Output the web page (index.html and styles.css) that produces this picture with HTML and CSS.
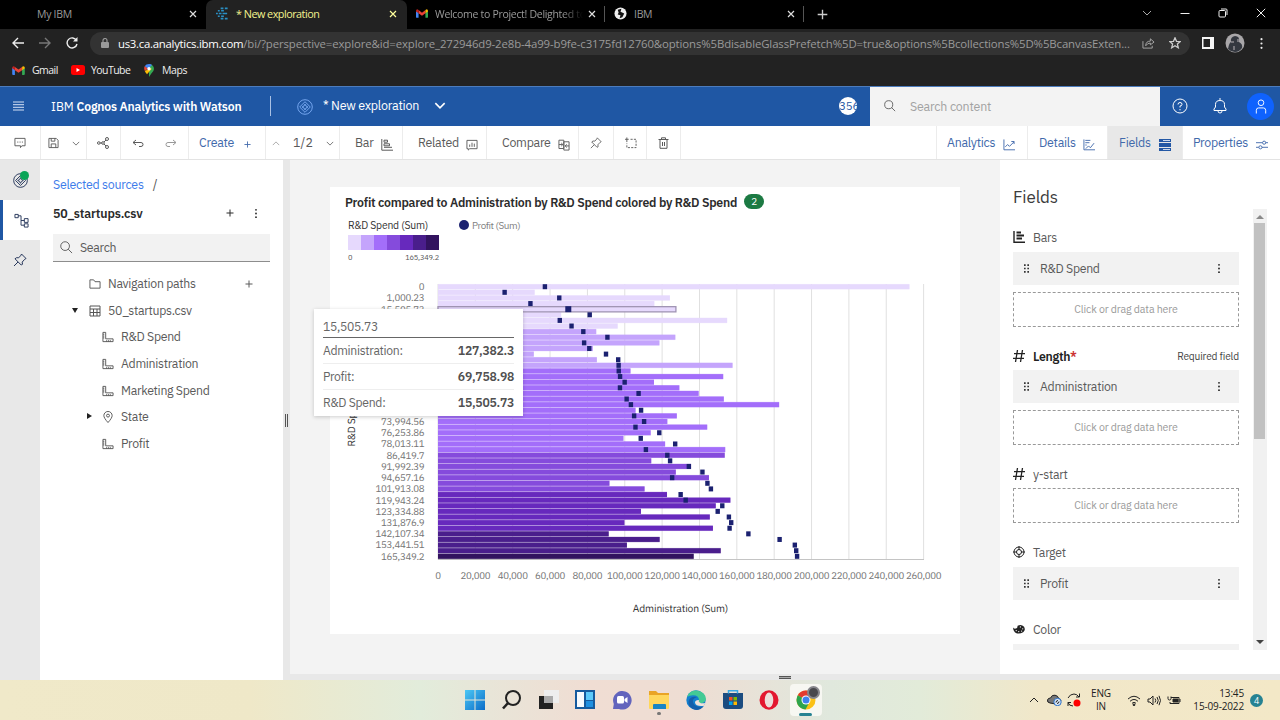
FILE: index.html
```html
<!DOCTYPE html>
<html lang="en">
<head>
<meta charset="utf-8">
<title>* New exploration</title>
<link rel="stylesheet" href="styles.css">
</head>
<body>
<svg class="defs" aria-hidden="true">
  <symbol id="x" viewBox="0 0 8 8"><path d="M1 1l6 6M7 1l-6 6"/></symbol>
  <symbol id="plus" viewBox="0 0 8 8"><path d="M4 .5v7M.5 4h7"/></symbol>
  <symbol id="down" viewBox="0 0 10 6"><path d="M1 1l4 4 4-4"/></symbol>
  <symbol id="up" viewBox="0 0 10 6"><path d="M1 5l4-4 4 4"/></symbol>
  <symbol id="dots" viewBox="0 0 4 12"><g fill="currentColor" stroke="none"><circle cx="2" cy="2" r="1"/><circle cx="2" cy="6" r="1"/><circle cx="2" cy="10" r="1"/></g></symbol>
  <symbol id="grip" viewBox="0 0 6 10"><path fill="currentColor" stroke="none" d="M0 0h2v2H0zM4 0h2v2H4zM0 4h2v2H0zM4 4h2v2H4zM0 8h2v2H0zM4 8h2v2H4z"/></symbol>
  <symbol id="lens" viewBox="0 0 14 14"><circle cx="5.500" cy="5.500" r="4.700"/><path d="M8.800 8.800L13 13"/></symbol>
  <symbol id="gmail" viewBox="0 0 14 10"><g stroke="none"><path fill="#4285f4" d="M0 2v7q0 1 1 1h2V4z"/><path fill="#34a853" d="M14 2v7q0 1-1 1h-2V4z"/><path fill="#ea4335" d="M3 1l4 3 4-3v3.600L7 7.600 3 4.600z"/><path fill="#c5221f" d="M0 2Q0 0 2 .2L3 1v3.600L0 2.600z"/><path fill="#fbbc04" d="M14 2q0-2-2-1.800L11 1v3.600l3-2z"/></g></symbol>
  <symbol id="compass" viewBox="0 0 16 16"><circle cx="8" cy="8" r="7.300"/><path d="M8 2.700L13.300 8 8 13.300 2.700 8z"/><path d="M8 5l1 2 2 1-2 1-1 2-1-2-2-1 2-1z"/></symbol>
  <symbol id="pin" viewBox="0 0 14 14"><path d="M8.500 1L13 5.500l-1.300.8-2.500 2.800.3 2.200L8.200 12 2 5.800l1.500-1.100 2.200.1L8 2.200zM5 9l-4 4"/></symbol>
  <symbol id="ruler" viewBox="0 0 13 12"><path d="M1 1h3v7h8v3H1zM1 3h1.500M1 5h1.500M1 7h1.500M5 11V9.500M7 11V9.500M9 11V9.500"/></symbol>
  <symbol id="bars" viewBox="0 0 12 12"><path d="M.8 0v11.200H12M3 1.200h3.500v2H3zM3 4.800h5.500v2H3zM3 8.300h8"/></symbol>
  <symbol id="hash" viewBox="0 0 12 12"><path d="M4.500 0L2.500 12M9.500 0l-2 12M1 3.700h11M0 8.300h11"/></symbol>
</svg>

<div class="screen">
  <div class="tabs">
    <div class="tab t1"><span>My IBM</span><svg class="close"><use href="#x"/></svg></div>
    <div class="tab t2 active">
      <svg class="fav" viewBox="0 0 14 14"><path d="M5 1.500h3M9.500 1.500h3M2 4h2M5.500 4h3M0 7h2M3 7h3M7 7h5M2 10h2M5.500 10h3M5 12.500h3M9.500 12.500h3"/></svg>
      <span>* New exploration</span><svg class="close"><use href="#x"/></svg></div>
    <div class="tab t3"><svg class="fav gm"><use href="#gmail"/></svg><span class="fade">Welcome to Project! Delighted to</span><svg class="close"><use href="#x"/></svg></div>
    <div class="tab t4"><svg class="fav" viewBox="0 0 14 14"><circle cx="7" cy="7" r="6.500" fill="#eee"/><path d="M4 3l4-1-1 3 4 2-2 4-3 1 1-3-3-1 1-2z" fill="#111"/></svg><span>IBM</span><svg class="close"><use href="#x"/></svg></div>
    <svg class="newtab"><use href="#plus"/></svg>
    <div class="winctl">
      <svg class="w-down"><use href="#down"/></svg>
      <svg class="w10" viewBox="0 0 10 10"><path d="M.5 5.500h9"/></svg>
      <svg class="w10" viewBox="0 0 10 10"><rect x="1" y="2.500" width="6.500" height="6.500" rx="1"/><path d="M3 1h5q1 0 1 1v5"/></svg>
      <svg class="w10" viewBox="0 0 10 10"><path d="M.8.8l8.400 8.400M9.200.8L.8 9.200"/></svg>
    </div>
  </div>

  <div class="navbar">
    <svg class="nv" viewBox="0 0 12 12"><path d="M12 6H1M6 1L1 6l5 5"/></svg>
    <svg class="nv dim" viewBox="0 0 12 12"><path d="M0 6h11M6 1l5 5-5 5"/></svg>
    <svg class="nv" viewBox="0 0 12 12"><path d="M10.500 3.500A5 5 0 1 0 11 7"/><path d="M11.500 0v4.500H7z" fill="#eee" stroke="none"/></svg>
    <div class="omni">
      <svg class="lock" viewBox="0 0 8 10"><rect y="4" width="8" height="6" rx="1" fill="#9a9a9a" stroke="none"/><path d="M2 4V2.500a2 2 0 0 1 4 0V4"/></svg>
      <span class="url"><b>us3.ca.analytics.ibm.com</b><i>/bi/?perspective=explore&amp;id=explore_272946d9-2e8b-4a99-b9fe-c3175fd12760&amp;options%5BdisableGlassPrefetch%5D=true&amp;options%5Bcollections%5D%5BcanvasExten...</i></span>
      <svg class="share0" viewBox="0 0 14 12"><path d="M1 4v7.500h10V9M4 9q0-5 5-5V1.500L13 5 9 8V6Q6 6 4 9z"/></svg>
      <svg class="star" viewBox="0 0 12 12"><path d="M6 .8l1.500 3.500 3.800.3-2.900 2.500.9 3.700L6 8.800l-3.300 2 .9-3.700L.7 4.600l3.800-.3z"/></svg>
    </div>
    <svg class="side" viewBox="0 0 12 12"><path fill="#f5f5f5" stroke="none" fill-rule="evenodd" d="M0 0h12v12H0zM1.500 2v8H8V2z"/></svg>
    <svg class="ava" viewBox="0 0 20 20"><circle cx="10" cy="10" r="9.500" fill="#a9a7a9"/><path d="M3 16q1-6 3-7-1-5 4-6 5 0 4 6 4 2 3 6-3 4-7 4-4 0-7-3z" fill="#343840"/><path d="M6 8h3v2H6zM12 6h2v3h-2zM8 13h2v4H8z" fill="#77767c"/></svg>
    <svg class="menu0"><use href="#dots"/></svg>
  </div>

  <div class="bookmarks">
    <svg class="bm"><use href="#gmail"/></svg><span class="b1">Gmail</span>
    <svg class="yt" viewBox="0 0 14 10"><rect width="14" height="10" rx="2.500" fill="#f00"/><path d="M5.500 3v4L9 5z" fill="#fff"/></svg><span class="b2">YouTube</span>
    <svg class="mp" viewBox="0 0 10 13"><path d="M5 0a5 5 0 0 1 5 5Q10 7 7 10L5 13z" fill="#34a853"/><path d="M5 0Q2 0 .7 2.300L4 5l4-4Q7 0 5 0z" fill="#4285f4"/><path d="M.7 2.300Q-.4 4 .8 7L4 4.800z" fill="#ea4335"/><path d="M.8 7Q1.300 8.300 3 10.300L8 4.500 5 5z" fill="#fbbc04"/><circle cx="5" cy="4.800" r="1.700" fill="#fff"/></svg><span>Maps</span>
  </div>

  <header class="appbar">
    <svg class="burger" viewBox="0 0 11 10"><path d="M0 1h11M0 3.700h11M0 6.300h11M0 9h11"/></svg>
    <span class="brand">IBM <b>Cognos Analytics with Watson</b></span>
    <div class="vline"></div>
    <svg class="comp"><use href="#compass"/></svg>
    <span class="expl">* New exploration</span>
    <svg class="exd"><use href="#down"/></svg>
    <span class="count"><span>356</span></span>
    <div class="gsearch"><svg><use href="#lens"/></svg><span>Search content</span></div>
    <svg class="help" viewBox="0 0 16 16"><circle cx="8" cy="8" r="7"/><path d="M6 6.500q0-2 2-2t2 1.800Q10 8 8 8v1.500M8 11v1.300"/></svg>
    <svg class="bell" viewBox="0 0 14 16"><path d="M7 0v2M1 12.500V11l1.500-2V6.500q0-4 4.500-4t4.500 4V9l1.500 2v1.500zM5 13q0 2 2 2t2-2"/></svg>
    <span class="user"><svg viewBox="0 0 12 16"><circle cx="6" cy="4" r="3"/><path d="M1 15.500V12q0-2.500 2.500-2.500h5Q11 9.500 11 12v3.500"/></svg></span>
  </header>

  <nav class="tools">
    <div class="c c1"><svg class="s12" viewBox="0 0 13 12"><path d="M1 1h11v8H8.500l-1.500 2V9H1zM3.500 5h1.200M6 5h1.200M8.500 5h1.200"/></svg></div>
    <div class="c c2"><svg class="s11" viewBox="0 0 12 12"><path d="M1 1h8l2 2v8H1zM3.500 1v3h4V1M3.500 11V7h5v4"/></svg><svg class="dn"><use href="#down"/></svg></div>
    <div class="c c3"><svg class="s12" viewBox="0 0 12 12"><circle cx="10" cy="2" r="1.500"/><circle cx="10" cy="10" r="1.500"/><circle cx="6" cy="6" r="1.300"/><circle cx="1.800" cy="6" r="1.300"/><path d="M3 6h2M7 5l2-2M7 7l2 2"/></svg></div>
    <div class="c c4"><svg class="un" viewBox="0 0 12 9"><path d="M4 1L1 3.500 4 6M1 3.500h8q2 0 2 2t-2 2H7"/></svg><svg class="un dim2" viewBox="0 0 12 9"><path d="M8 1l3 2.500L8 6M11 3.500H3q-2 0-2 2t2 2h2"/></svg></div>
    <div class="c c5 blue"><span>Create</span><svg class="pl"><use href="#plus"/></svg></div>
    <div class="c c6"><svg class="dn dim2"><use href="#up"/></svg><span>1/2</span><svg class="dn"><use href="#down"/></svg></div>
    <div class="c c7"><span>Bar</span><svg class="s12 lo"><use href="#bars"/></svg></div>
    <div class="c c8"><span>Related</span><svg class="s12 lo" viewBox="0 0 13 12"><path d="M1 1h11v9H4l-1.500 1.500V10H1zM4 8V5.500M6.500 8V3.500M9 8V4.500"/></svg></div>
    <div class="c c9"><span>Compare</span><svg class="s12 lo" viewBox="0 0 13 12"><path d="M1 .8h5.300v9H1zM6.300 2.500H12v9H6.300zM1 5.500h4M3.500 3.800L5.300 5.500 3.500 7.200M12 7H8M9.500 5.300L7.700 7l1.800 1.700"/></svg></div>
    <div class="c c10"><svg class="s12"><use href="#pin"/></svg></div>
    <div class="c c11"><svg class="s12" viewBox="0 0 13 12"><path d="M2 0v5M0 2h4"/><path d="M6 2h6v9H2V6.500" stroke-dasharray="2.300 1.300"/></svg></div>
    <div class="c c12"><svg class="s11" viewBox="0 0 10 12"><path d="M0 2.500h10M3 2V.8h4V2M1.500 3v8.300h7V3M4 5v4M6 5v4"/></svg></div>
    <div class="grow"></div>
    <div class="c c13 blue"><span>Analytics</span><svg class="s12 lo" viewBox="0 0 13 12"><path d="M1 0v11.200h12M2.500 8L5 5.500l2 2 5-5M9 2.200h3V5"/></svg></div>
    <div class="c c14 blue"><span>Details</span><svg class="s12 lo" viewBox="0 0 13 12"><path d="M1 0v11.200h12M2.500 1H8M2.500 3.500H7M2.500 6H4M3 10l3-3 2 2 4-5"/></svg></div>
    <div class="c c15 blue sel"><span>Fields</span><svg class="s12 lo" viewBox="0 0 12 12"><path d="M0 0h12v3H0zM0 4h12v4H0zM0 9h12v3H0z" fill="#2458a5" stroke="none"/><path d="M4 1.500h7M4 10.500h7" stroke="#c9d8ef"/></svg></div>
    <div class="c c16 blue"><span>Properties</span><svg class="s12 lo" viewBox="0 0 13 12"><path d="M0 3.500h7M10.500 3.500H13M0 8.500h3M6.500 8.500H13"/><circle cx="8.800" cy="3.500" r="1.700"/><circle cx="4.800" cy="8.500" r="1.700"/></svg></div>
  </nav>

  <main class="body">
    <aside class="rail">
      <div class="r"><svg class="s15"><use href="#compass"/></svg><i class="green"></i></div>
      <div class="r on"><svg class="s15" viewBox="0 0 16 16"><path d="M1 1.500h3.500V5H1zM4.500 3H7.500v10H11M7.500 8H11M11 6h4v4h-4zM11 11.500h4v3.500h-4z"/></svg></div>
      <div class="r"><svg class="s14"><use href="#pin"/></svg></div>
    </aside>

    <section class="sources">
      <div class="crumb"><span>Selected sources</span><em>/</em></div>
      <div class="srcname"><b>50_startups.csv</b><svg class="p7"><use href="#plus"/></svg><svg class="kb"><use href="#dots"/></svg></div>
      <div class="find"><svg><use href="#lens"/></svg><span>Search</span></div>
      <div class="tree">
        <div class="row l1"><svg class="s12" viewBox="0 0 13 12"><path d="M1 1.500h4l1.500 2H12v7H1z"/></svg><span class="n1">Navigation paths</span><svg class="p7"><use href="#plus"/></svg></div>
        <div class="row l1"><i class="caret d"></i><svg class="s12" viewBox="0 0 12 12"><path d="M1 1h10v10H1zM1 4h10M1 7.500h10M4.500 4v7M8 4v7"/></svg><span>50_startups.csv</span></div>
        <div class="row l2"><svg class="s12"><use href="#ruler"/></svg><span>R&amp;D Spend</span></div>
        <div class="row l2"><svg class="s12"><use href="#ruler"/></svg><span>Administration</span></div>
        <div class="row l2"><svg class="s12"><use href="#ruler"/></svg><span>Marketing Spend</span></div>
        <div class="row l2"><i class="caret rt"></i><svg class="s12" viewBox="0 0 12 13"><path d="M6 12.500Q1.500 7.500 1.500 5a4.500 4.500 0 0 1 9 0q0 2.500-4.500 7.500z"/><circle cx="6" cy="5" r="1.600"/></svg><span>State</span></div>
        <div class="row l2"><svg class="s12"><use href="#ruler"/></svg><span>Profit</span></div>
      </div>
    </section>
    <div class="split"><i></i></div>

    <section class="canvas">
      <div class="card">
        <h1><span>Profit compared to Administration by R&amp;D Spend colored by R&amp;D Spend</span><b>2</b></h1>
        <div class="legend">
          <div class="lg1"><span class="lgt">R&amp;D Spend (Sum)</span>
            <div class="ramp"><i class="k0"></i><i class="k1"></i><i class="k2"></i><i class="k3"></i><i class="k4"></i><i class="k5"></i><i class="k6"></i></div>
            <div class="range"><span>0</span><span>165,349.2</span></div></div>
          <div class="lg2"><i></i><span>Profit (Sum)</span></div>
        </div>
        <svg id="plot" viewBox="330 270 630 364"></svg>
        <div class="tip">
          <div class="th">15,505.73</div>
          <div class="tr"><span>Administration:</span><b>127,382.3</b></div>
          <div class="tr"><span>Profit:</span><b>69,758.98</b></div>
          <div class="tr"><span>R&amp;D Spend:</span><b>15,505.73</b></div>
        </div>
      </div>
      <div class="dock"><i></i></div>
    </section>

    <aside class="fields">
      <h2>Fields</h2>
      <div class="fwrap">
        <div class="flist">
          <div class="fh"><svg class="s12 hb" viewBox="0 0 12 12"><path d="M1 0v11.200h11" stroke-width="1.400"/><path d="M3.500 1.500H8M3.500 4.500H11M3.500 7.500H9" stroke-width="1.900"/></svg><span>Bars</span></div>
          <div class="slot"><svg class="gr"><use href="#grip"/></svg><span>R&amp;D Spend</span><svg class="kb"><use href="#dots"/></svg></div>
          <div class="drop">Click or drag data here</div>
          <div class="fh h2"><svg class="s12 hs"><use href="#hash"/></svg><b>Length<u>*</u></b><small>Required field</small></div>
          <div class="slot"><svg class="gr"><use href="#grip"/></svg><span>Administration</span><svg class="kb"><use href="#dots"/></svg></div>
          <div class="drop">Click or drag data here</div>
          <div class="fh h3"><svg class="s12 hs"><use href="#hash"/></svg><span>y-start</span></div>
          <div class="drop m0">Click or drag data here</div>
          <div class="fh h4"><svg class="s12" viewBox="0 0 12 12"><circle cx="6" cy="6" r="5"/><circle cx="6" cy="6" r="2.500"/><path d="M6 0v4M6 8v4M0 6h4M8 6h4"/></svg><span>Target</span></div>
          <div class="slot"><svg class="gr"><use href="#grip"/></svg><span>Profit</span><svg class="kb"><use href="#dots"/></svg></div>
          <div class="fh h5"><svg class="s12 pal" viewBox="0 0 13 12"><path d="M0 4.500q1 1.500 3 1 2 0 2-3 4-2 7 1 2 4-1 6-5 3-9 0-2-2-2-5z" fill="#222"/><g fill="#fff"><circle cx="8" cy="3.800" r=".7"/><circle cx="10.500" cy="5.800" r=".7"/><circle cx="9.300" cy="8.200" r=".7"/><circle cx="6.200" cy="8.800" r=".7"/><circle cx="3.500" cy="7.700" r=".7"/></g></svg><span>Color</span></div>
          <div class="slot cut"></div>
        </div>
        <div class="sbar"><i class="su"></i><div class="thumb"></div><i class="sd"></i></div>
      </div>
    </aside>
  </main>

  <footer class="taskbar">
    <div class="apps">
      <svg viewBox="0 0 20 20"><defs><linearGradient id="wg" x2="1" y2="1"><stop stop-color="#4cc8f5"/><stop offset="1" stop-color="#0a6cc8"/></linearGradient></defs><path fill="url(#wg)" d="M0 0h9.500v9.500H0zM10.500 0H20v9.500h-9.500zM0 10.500h9.500V20H0zM10.500 10.500H20V20h-9.500z"/></svg>
      <svg viewBox="0 0 20 20"><circle cx="11" cy="8" r="7"/><path d="M6 13l-5 5.500" stroke-width="2.600"/></svg>
      <svg viewBox="0 0 20 20"><path d="M0 6h14v13H0z" fill="#222"/><path d="M5 0h15v13H5z" fill="#eee"/><path d="M5 6h9v7H5z" fill="#aaa"/></svg>
      <svg viewBox="0 0 20 20"><path d="M0 0h20v19H0z" fill="#155a9e"/><path d="M2 2h7v15H2z" fill="#f6fafe"/><path d="M11 2h7v8h-7z" fill="#5cc9fa"/><path d="M11 11h7v6h-7z" fill="#1f8fe0"/></svg>
      <svg viewBox="0 0 20 20"><path d="M1 19l.8-5A9.300 9.300 0 1 1 7 19z" fill="#6264bd"/><rect x="5" y="6" width="7" height="7.500" rx="1.500" fill="#fff"/><path d="M12.500 9L15.500 7v6l-3-2z" fill="#fff"/></svg>
      <span class="folder"><svg viewBox="0 0 20 20"><path d="M0 1h7l2 2h11v15H0z" fill="#e9a426"/><path d="M0 5h20v13q0 1-1 1H1q-1 0-1-1z" fill="#ffd75c"/><path d="M4 15q0-1 1-1h11q1 0 1 1v4H4z" fill="#1785c5"/></svg></span>
      <svg viewBox="0 0 20 20"><circle cx="10" cy="10" r="9.700" fill="#1480cf"/><path d="M1 7Q4-1 12 .8q8 2 8 8.500-1 4-6 4-2-1-1-3 0-5-6-5-4 0-6 1.700z" fill="#43ca95"/><path d="M7 10q-1 6 7 7 3 0 4-1-5 6-11 3Q1 16 3 10q2-4 8-3-3 1-4 3z" fill="#155fab"/><path d="M13 10q-1 2 2 3.300 4 0 4.500-.5l-1.500 3q-8 1-9-3 0-3 4-2.800z" fill="#f0e2da"/></svg>
      <svg viewBox="0 0 20 20"><path d="M0 3h20v13q0 3-3 3H3q-3 0-3-3z" fill="#1b4c80"/><path d="M5.500 3.500V.8h9v2.700" fill="none" stroke="#38a9e4" stroke-width="1.500"/><path d="M6 7h3.500v3.500H6z" fill="#f25022"/><path d="M10.500 7H14v3.500h-3.500z" fill="#7fba00"/><path d="M6 11.500h3.500V15H6z" fill="#00a4ef"/><path d="M10.500 11.500H14V15h-3.500z" fill="#ffb900"/></svg>
      <svg viewBox="0 0 20 20"><ellipse cx="10" cy="10" rx="9.500" ry="9.700" fill="#e3172f"/><ellipse cx="10" cy="10" rx="4.300" ry="7.500" fill="#ecdeda"/></svg>
      <span class="chrome"><svg viewBox="0 0 20 20"><circle cx="10" cy="10" r="9.500" fill="#fbc116"/><path d="M10 10L1.800 5.200A9.500 9.500 0 0 1 18.500 6z" fill="#e33b2e"/><path d="M10 10L1.800 5.200A9.500 9.500 0 0 0 9.500 19.500L13.500 12z" fill="#2da44e"/><circle cx="10" cy="10" r="4.500" fill="#fff"/><circle cx="10" cy="10" r="3.500" fill="#3f82ee"/></svg><i></i></span>
    </div>
    <div class="tray">
      <svg class="tu"><use href="#up"/></svg>
      <svg class="tc" viewBox="0 0 15 12"><path d="M3 9Q0 8.500.5 6 1 4 3.500 4 5 .5 8 1.200q3 .5 3.500 3Q14 5 14 7L9 10z" fill="#777"/><circle cx="10.500" cy="8" r="3.700" fill="#dbe9fa" stroke="#2a6ec5"/><path d="M9 8.500q0-2 2-2M12 7.500q0 2-2 2"/></svg>
      <svg class="ts" viewBox="0 0 14 14"><path d="M1 5q2-4 6-4 3 0 5 3M12.500.5V4H9M6 13q-4 0-5-3.500M1 13V9.500h3"/><circle cx="10" cy="10" r="3.500" class="rec"/></svg>
      <div class="lang">ENG<br>IN</div>
      <svg class="tw" viewBox="0 0 14 11"><path d="M1 4q6-5.500 12 0M3 6.300q4-3.700 8 0M5 8.300q2-2 4 0"/><circle cx="7" cy="9.800" r=".9" fill="#222"/></svg>
      <svg class="tv" viewBox="0 0 14 11"><path d="M1 4h2l3-3v9L3 7H1zM8 3.500q1.500 2 0 4M10 2q2.500 3.500 0 7M12 .8q3 4.700 0 9.400"/></svg>
      <svg class="tb" viewBox="0 0 14 10"><path d="M4 2.500h8v6H3V7M13 4v3M1 1.500v2q0 1.500 1.500 1.500T4 3.500v-2"/><path d="M6 4h5v3H6z" fill="#222"/></svg>
      <div class="clock">13:45<br>15-09-2022</div>
      <span class="badge">4</span>
    </div>
  </footer>
</div>
<script src="chart.js"></script>
</body>
</html>
```
FILE: styles.css
```css
*{box-sizing:border-box}
body{margin:0;overflow:hidden;font-family:"IBM Plex Sans",Roboto,"Liberation Sans",sans-serif;font-size:12.300px;letter-spacing:-.3px;color:#5a5a5a}
svg{flex:none;fill:none;stroke:currentColor;stroke-width:1}
.defs{position:absolute;width:0;height:0}
b{font-weight:600}
i,em{font-style:normal}
span,b{white-space:nowrap}
.screen{width:1280px;height:720px;display:flex;flex-direction:column}
.grow{flex:1}
.tabs,.navbar,.bookmarks,.taskbar{font-family:"Segoe UI","Open Sans","Noto Sans",sans-serif}
.tabs{height:29px;background:#000;display:flex;align-items:center;color:#9a9a9a;font-size:10.500px;letter-spacing:-.3px}
.tab{height:29px;display:flex;align-items:center;position:relative}
.tab .close{width:8px;height:8px;margin-left:auto;color:#ddd;stroke-width:1.200}
.t1{width:206px;padding:0 9px 2px 37px}
.t2{width:201px;padding:0 10px 2px 10px}
.t3{width:198px;padding:0 9px 2px}
.t4{width:199px;padding:0 9px 2px}
.tab.active{background:#222;border-radius:7px 7px 0 0;color:#f3f38f}
.tab.active .close{color:#ffff9c}
.t3::after,.t4::after{content:"";width:1px;height:16px;background:#555;position:absolute;right:0;top:6px}
.fav{width:13px;height:13px;margin-right:7px;stroke-width:0}
.t2 .fav{stroke-width:1.700;color:#2a8fc4}
.t2 span{font-size:10.800px;letter-spacing:-.5px}
.gm{height:9px;width:12px}
.fade{width:148px;overflow:hidden;-webkit-mask-image:linear-gradient(90deg,#000 86%,transparent)}
.newtab{width:11px;height:11px;margin-left:13px;color:#ccc}
.winctl{margin-left:auto;display:flex;align-items:center;gap:28px;padding-right:14px;color:#eee;height:25px;margin-top:-4px}
.w-down{width:10px;height:6px;color:#aaa}.w10{width:10px;height:10px}
.navbar{height:28px;background:#222;display:flex;align-items:center;color:#eee;padding-left:12px}
.nv{width:12px;height:12px;margin-right:15px;stroke-width:1.400}.dim{color:#777}
.omni{width:1100px;margin-left:-3px;height:23px;border-radius:12px;background:#333;display:flex;align-items:center;padding:0 10px 0 11px}
.lock{width:8px;height:10px;color:#9a9a9a;stroke-width:1.200}
.url{margin-left:9px;width:1013px;font-size:11.400px;color:#9a9a9a;display:flex;letter-spacing:-.115px}
.url b{font-weight:400;color:#fff;letter-spacing:-.28px}
.share0{width:13px;height:12px;margin-left:12px;color:#aaa}
.star{width:12px;height:12px;margin-left:14px;stroke-width:1.300;color:#ccc}
.side{width:12px;height:12px;margin-left:12px}
.ava{width:20px;height:20px;margin-left:11px;stroke:none}
.menu0{width:5px;height:13px;margin-left:14px}
.bookmarks{height:29px;background:#222;display:flex;align-items:center;padding:0 0 3px 12px;color:#eee;font-size:10.500px;letter-spacing:-.55px}
.bookmarks svg{stroke:none}
.bm{width:13px;height:9px;margin-right:7px}.b1{width:39px}
.yt{width:14px;height:10px;margin-right:6px}.b2{width:53px}
.mp{width:10px;height:13px;margin-right:8px}
.bookmarks span:last-child{letter-spacing:-.4px}
.appbar{height:40px;background:#1f57a4;display:flex;align-items:center;color:#fff;border-top:1px solid #4c7cbd}
.burger{width:11px;height:10px;margin-left:13px;color:#d5e2f5;margin-top:-1px}
.brand{width:219px;margin-left:27px;font-size:12.200px;margin-top:-2px;letter-spacing:0}
.brand b{letter-spacing:-.19px}
.vline{width:1px;height:20px;background:#a9c1e4;margin-top:-2px}
.comp{width:16px;height:16px;margin-left:26px;color:#75a6ef}
.expl{margin-left:10px;width:105px;font-size:12.500px;letter-spacing:-.25px;margin-top:-3px}
.exd{width:12px;height:7px;margin-left:6px;stroke-width:1.400;margin-top:-2px}
.count{width:18px;height:18px;border-radius:50%;background:#fff;color:#1f57a4;overflow:hidden;margin:-1px 0 0 auto;display:flex;font-size:11.500px;line-height:18px;letter-spacing:-.1px}
.gsearch{width:290px;height:39px;background:#f3f3f3;color:#a2a2a2;margin-left:13px;display:flex;align-items:center;padding:0 0 1px 14px;font-size:12.400px;letter-spacing:-.2px}
.gsearch svg{width:12px;height:12px;color:#555;margin-right:14px}
.help{width:16px;height:16px;margin-left:12px;margin-top:-1px}
.bell{width:14px;height:16px;margin-left:25px;margin-top:-1px}
.user{width:27px;height:27px;border-radius:50%;background:#0f62fe;display:flex;align-items:center;justify-content:center;margin:-1px 6px 0 20px}
.user svg{width:12px;height:15px}
.tools{height:34px;background:#fff;border-bottom:1px solid #e3e3e3;display:flex;font-size:12.400px;letter-spacing:-.27px}
.c{border-right:1px solid #ececec;display:flex;align-items:center}
.c span{margin-top:-1px}
.s11{width:11px;height:12px}.s12{width:12px;height:12px}.s14{width:14px;height:14px}.s15{width:15px;height:15px}
.lo{margin-top:4px}
.dn{width:8px;height:5px;margin-top:2px}
.dim2{color:#999}
.blue{color:#4169ab}
.c1{width:41px;padding-left:14px}.c2{width:46px;padding-left:7px;gap:13px}.c3{width:34px;padding-left:10px}
.c4{width:68px;padding-left:11px;gap:21px}.un{width:12px;height:9px;margin-top:2px}
.c5{width:77px;padding-left:10px;gap:10px}.pl{width:7px;height:7px;margin-top:3px}
.c6{width:74px;padding-left:6px;gap:13px}.c6 span{letter-spacing:.1px}
.c7{width:63px;padding-left:15px;gap:8px}.c8{width:84px;padding-left:15px;gap:7px}.c9{width:92px;padding-left:15px;gap:7px}
.c10{width:35px;padding-left:11px}.c11{width:33px;padding-left:11px}.c12{width:34px;padding-left:11px}
.c13{width:92px;border-left:1px solid #ececec;padding-left:10px;gap:8px}.c14{width:80px;padding-left:11px;gap:7px}
.c15{width:75px;padding-left:11px;gap:8px;background:#e8e8e8}.c16{width:97px;padding-left:10px;gap:8px;border:0}
.body{height:520px;display:flex}
.rail{width:40px;background:#e8e8e8;color:#25355a}
.r{height:40px;display:flex;align-items:center;justify-content:center;position:relative}
.r.on{background:#fff;border-left:3px solid #1f57a4}
.green{position:absolute;left:20px;top:11px;width:9px;height:9px;border-radius:50%;background:#0aa557}
.sources{width:243px;background:#fff;padding:16px 13px 0}
.crumb{height:16px;line-height:16px;color:#3d7bea;font-size:12.400px;letter-spacing:-.28px}.crumb em{margin-left:9px;color:#525252}
.srcname{height:16px;margin-top:13px;display:flex;align-items:center;color:#2a2a2a;font-size:12.400px;letter-spacing:-.15px}
.srcname b{width:173px}.p7{width:8px;height:8px}.kb{width:4px;height:11px}
.srcname .kb{margin-left:20px}
.find{height:28px;margin-top:13px;border-bottom:1px solid #8d8d8d;background:#f2f2f2;display:flex;align-items:center;padding-left:7px;width:217px}
.find svg{width:13px;height:13px;margin-right:7px}
.find span{margin-top:-2px}
.tree{padding-top:9px}
.row{height:26.600px;display:flex;align-items:center;position:relative}
.row span{margin-top:-2px}
.row .s12{margin-right:7px;color:#555}
.l1{padding-left:36px}.l2{padding-left:49px}
.n1{width:137px}
.caret{position:absolute;border:3.500px solid transparent}
.caret.d{left:19px;top:10px;border-top:5px solid #222}
.caret.rt{left:34px;top:9px;border-left:5px solid #222}
.split{width:7px;background:#e8e8e8;padding:254px 0 0 2px}
.split i{display:block;width:3px;height:13px;border:1px solid #555;border-width:0 1px}
.canvas{width:710px;background:#f3f3f3;padding:27px 40px 0;display:flex;flex-direction:column}
.card{width:630px;height:447px;background:#fff;position:relative}
h1{margin:0;height:30px;padding:0 0 1px 15px;font-size:12.300px;letter-spacing:-.23px;font-weight:600;color:#2c2c2c;display:flex;align-items:center}
h1 b{width:20px;height:15px;border-radius:8px;background:#1c7a43;color:#fff;font-size:10px;font-weight:400;text-align:center;line-height:15px;margin-left:7px}
.legend{height:53px;display:flex;padding:2px 0 0 18px;font-size:10.400px;letter-spacing:-.2px;color:#333}
.lg1{width:91px}.lgt{display:block;height:13px;line-height:12px}
.ramp{height:15px;margin-top:3px;display:grid;grid-template-columns:repeat(7,1fr)}
.k0{background:#e6d9fd}.k1{background:#c4a4fc}.k2{background:#a36efa}.k3{background:#854bdc}.k4{background:#6729bd}.k5{background:#4a1e8c}.k6{background:#32135f}
.range{display:flex;justify-content:space-between;font-size:7.500px;color:#555;line-height:15px}
.lg2{margin-left:20px;height:13px;display:flex;align-items:center;color:#808080;font-size:9.900px;letter-spacing:-.4px}
.lg2 i{width:10px;height:10px;border-radius:50%;background:#1b2170;margin-right:3px;margin-top:-1px}
.lg2 span{margin-top:-1px}
#plot{display:block;width:630px;height:364px;stroke:none}
#plot text{fill:#757575;font-size:9.700px;letter-spacing:-.3px;text-rendering:geometricPrecision}
#plot .axt{fill:#333;font-size:10.300px;letter-spacing:-.15px}
.tip{position:absolute;left:-16px;top:122px;width:209px;height:107px;background:#fff;box-shadow:0 1px 4px #0003;padding:6px 9px 0;font-size:12.200px;letter-spacing:-.3px;color:#666}
.th{height:23px;line-height:22px;border-bottom:1px solid #666;width:191px}
.tr{height:26px;display:flex;align-items:center;justify-content:space-between;border-bottom:1px solid #eee;padding-bottom:1px}
.tr:last-child{border:0;height:24px}
.tr b{color:#505050;letter-spacing:-.26px}
.dock{margin:40px -40px 0;height:6px;background:#e8e8e8;padding:2px 0 0 489px}
.dock i{display:block;width:12px;height:3px;background:#aaa;border:1px solid #555;border-width:1px 0}
.fields{width:280px;background:#fff;padding:27px 0 0 13px;border-bottom:6px solid #e8e8e8}
h2{margin:0;height:22px;line-height:21px;font-size:17px;letter-spacing:-.15px;font-weight:400;color:#3c3c3c}
.fwrap{display:flex;height:441px;overflow:hidden}
.flist{width:226px;padding-top:19px;overflow:hidden}
.fh{height:18px;display:flex;align-items:center;position:relative}
.fh span,.fh b,.slot span{margin-top:-1px}
.fh .s12{margin-right:8px;color:#222}
.fh .pal{stroke:none}
.fh b{color:#222}.fh u{text-decoration:none;color:#c33}
.fh small{margin-left:auto;font-size:10.200px;letter-spacing:-.15px;color:#444}
.hs{stroke-width:1.300}
.slot{height:33px;background:#f2f2f2;margin-top:6px;display:flex;align-items:center;padding-left:11px}
.gr{width:5px;height:9px;margin-right:11px;color:#333}.slot .kb{margin:0 18px 0 auto;color:#222}
.drop{height:35px;border:1px dashed #999;margin-top:7px;display:flex;align-items:center;justify-content:center;font-size:10.600px;letter-spacing:-.15px;color:#9a9a9a;padding-bottom:1px}
.h2{margin-top:20px}.h2+.slot{margin-top:5px}
.h3{margin-top:20px}.m0{margin-top:5px}.h4{margin-top:20px}.h5{margin-top:20px}
.sbar{width:14px;background:#f1f1f1;margin-left:14px;padding:0 2px 0 1px;display:flex;flex-direction:column;align-items:center}
.thumb{width:11px;height:216px;background:#c1c1c1}
.su,.sd{border:4px solid transparent}
.su{border-bottom-color:#8a8a8a;border-top-width:0;margin:6px 0 4px}
.sd{border-top-color:#444;border-bottom-width:0;margin:auto 0 6px}
.taskbar{height:40px;background:linear-gradient(90deg,#f0e9c9 0,#efe8c8 250px,#e2ecdb 420px,#e8e5d8 490px,#f0ddd3 590px,#eeddd3 690px,#e0e8dd 830px,#e2ebd9 920px,#f1e7c9 1040px,#f3e8c7);display:flex;color:#222}
.apps{display:flex;align-items:center;gap:16.800px;margin-left:465px}
.apps>svg,.folder svg{width:20px;height:20px;stroke-width:0}
.apps>svg:nth-child(2){stroke-width:2}
.folder{width:20px;height:20px;position:relative}
.folder::after{content:"";position:absolute;left:8px;bottom:-5px;width:4px;height:3px;border-radius:2px;background:#777}
.chrome{width:32px;height:32px;border-radius:4px;background:#f7f7f2;position:relative;margin-left:-6px}
.chrome svg{width:20px;height:20px;margin:6px;stroke:none}
.chrome i{position:absolute;width:13px;height:13px;border-radius:50%;background:#48484c;border:2px solid #85858a;right:2px;top:2px}
.chrome::after{content:"";position:absolute;left:9px;bottom:0;width:13px;height:3px;border-radius:2px;background:#268292}
.tray{margin-left:auto;display:flex;align-items:center;padding-right:17px;font-size:10px;line-height:13px}
.rec{fill:#f00;stroke:none}
.lang{text-align:center;width:22px;margin:0 15px 0 9px;letter-spacing:-.2px}
.clock{text-align:right;width:52px;margin:0 6px 0 11px;white-space:nowrap;letter-spacing:-.15px}
.tu{width:10px;height:6px;margin-right:8px}.tc{width:15px;height:12px;margin-right:5px}.ts{width:14px;height:14px}
.tw{width:14px;height:11px;margin-right:6px}.tv{width:14px;height:11px;margin-right:6px}.tb{width:14px;height:10px}
.badge{width:13px;height:13px;border-radius:50%;background:#268292;color:#fff;text-align:center;line-height:13px;font-size:9px}
```
FILE: chart.js
```js
// R&D spend, administration, profit
const data = [
  [165349.2,136897.8,192261.83],[162597.7,151377.59,191792.06],[153441.51,101145.55,191050.39],[144372.41,118671.85,182901.99],
  [142107.34,91391.77,166187.94],[131876.9,99814.71,156991.12],[134615.46,147198.87,156122.51],[130298.13,145530.06,155752.6],
  [120542.52,148718.95,152211.77],[123334.88,108679.17,149759.96],[101913.08,110594.11,146121.95],[100671.96,91790.61,144259.4],
  [93863.75,127320.38,141585.52],[91992.39,135495.07,134307.35],[119943.24,156547.42,132602.65],[114523.61,122616.84,129917.04],
  [78013.11,121597.55,126992.93],[94657.16,145077.58,125370.37],[91749.16,114175.79,124266.9],[86419.7,153514.11,122776.86],
  [76253.86,113867.3,118474.03],[78389.47,153773.43,111313.02],[73994.56,122782.75,110352.25],[67532.53,105751.03,108733.99],
  [77044.01,99281.34,108552.04],[64664.71,139553.16,107404.34],[75328.87,144135.98,105733.54],[72107.6,127864.55,105008.31],
  [66051.52,182645.56,103282.38],[65605.48,153032.06,101004.64],[61994.48,115641.28,99937.59],[61136.38,152701.92,97483.56],
  [63408.86,129219.61,97427.84],[55493.95,103057.49,96778.92],[46426.07,157693.92,96712.8],[46014.02,85047.44,96479.51],
  [28663.76,127056.21,90708.19],[44069.95,51283.14,89949.14],[20229.59,65947.93,81229.06],[38558.51,82982.09,81005.76],
  [28754.33,118546.05,78239.91],[27892.92,84710.77,77798.83],[23640.93,96189.63,71498.49],[15505.73,127382.3,69758.98],
  [22177.74,154806.14,65200.33],[1000.23,124153.04,64926.08],[1315.46,115816.21,49490.75],[542.05,51743.15,35673.41],
  [0,252410.72,57241.13]
].sort((a, b) => a[0] - b[0]);
const limits = [24000, 50000, 80000, 110000, 140000, 164000, Infinity];
const colors = ['#e6d9fd', '#c4a4fc', '#a36efa', '#854bdc', '#6729bd', '#4a1e8c', '#32135f'];
const x = v => 438 + v * 485.6 / 260000;
const pitch = 5.617;
let out = '';
for (let v = 0; v <= 260000; v += 20000) {
  out += `<path d="M${x(v)} 284V559.5" stroke="#e0e0e0"/><text x="${x(v)}" y="579.300" text-anchor="middle">${v.toLocaleString('en-US')}</text>`;
}
out += '<path d="M438 559.5H924" stroke="#c4c4c4"/>';
data.forEach((d, i) => {
  const y = 286.700 + i * pitch;
  const c = colors[limits.findIndex(l => d[0] < l)];
  const w = x(d[1]) - 438;
  out += `<rect x="438" y="${y - 2.800}" width="${w}" height="5.600" fill="${c}" opacity=".4"/>`;
  out += `<rect x="438" y="${y - 2.450}" width="${w}" height="4.900" fill="${c}"/>`;
  if (i % 2 === 0 && (i < 6 || i > 22)) out += `<text x="424.300" y="${y + 3.400}" text-anchor="end">${d[0].toLocaleString('en-US')}</text>`;
});
out += `<rect x="438" y="${286.700 + 4 * pitch - 2.500}" width="${x(127382.3) - 438}" height="5.200" fill="none" stroke="#a094b4" stroke-width="1.300"/>`;
data.forEach((d, i) => {
  const w = i === 4 ? 6 : 4.400;
  const h = i === 4 ? 6 : 5;
  out += `<rect x="${x(d[2]) - w / 2}" y="${286.700 + i * pitch - h / 2}" width="${w}" height="${h}" fill="#1b2170"/>`;
});
out += '<text class="axt" x="680.500" y="612" text-anchor="middle">Administration (Sum)</text>';
out += '<text class="axt" transform="translate(355 446.500) rotate(-90)">R&amp;D Spend</text>';
document.getElementById('plot').innerHTML = out;
```
